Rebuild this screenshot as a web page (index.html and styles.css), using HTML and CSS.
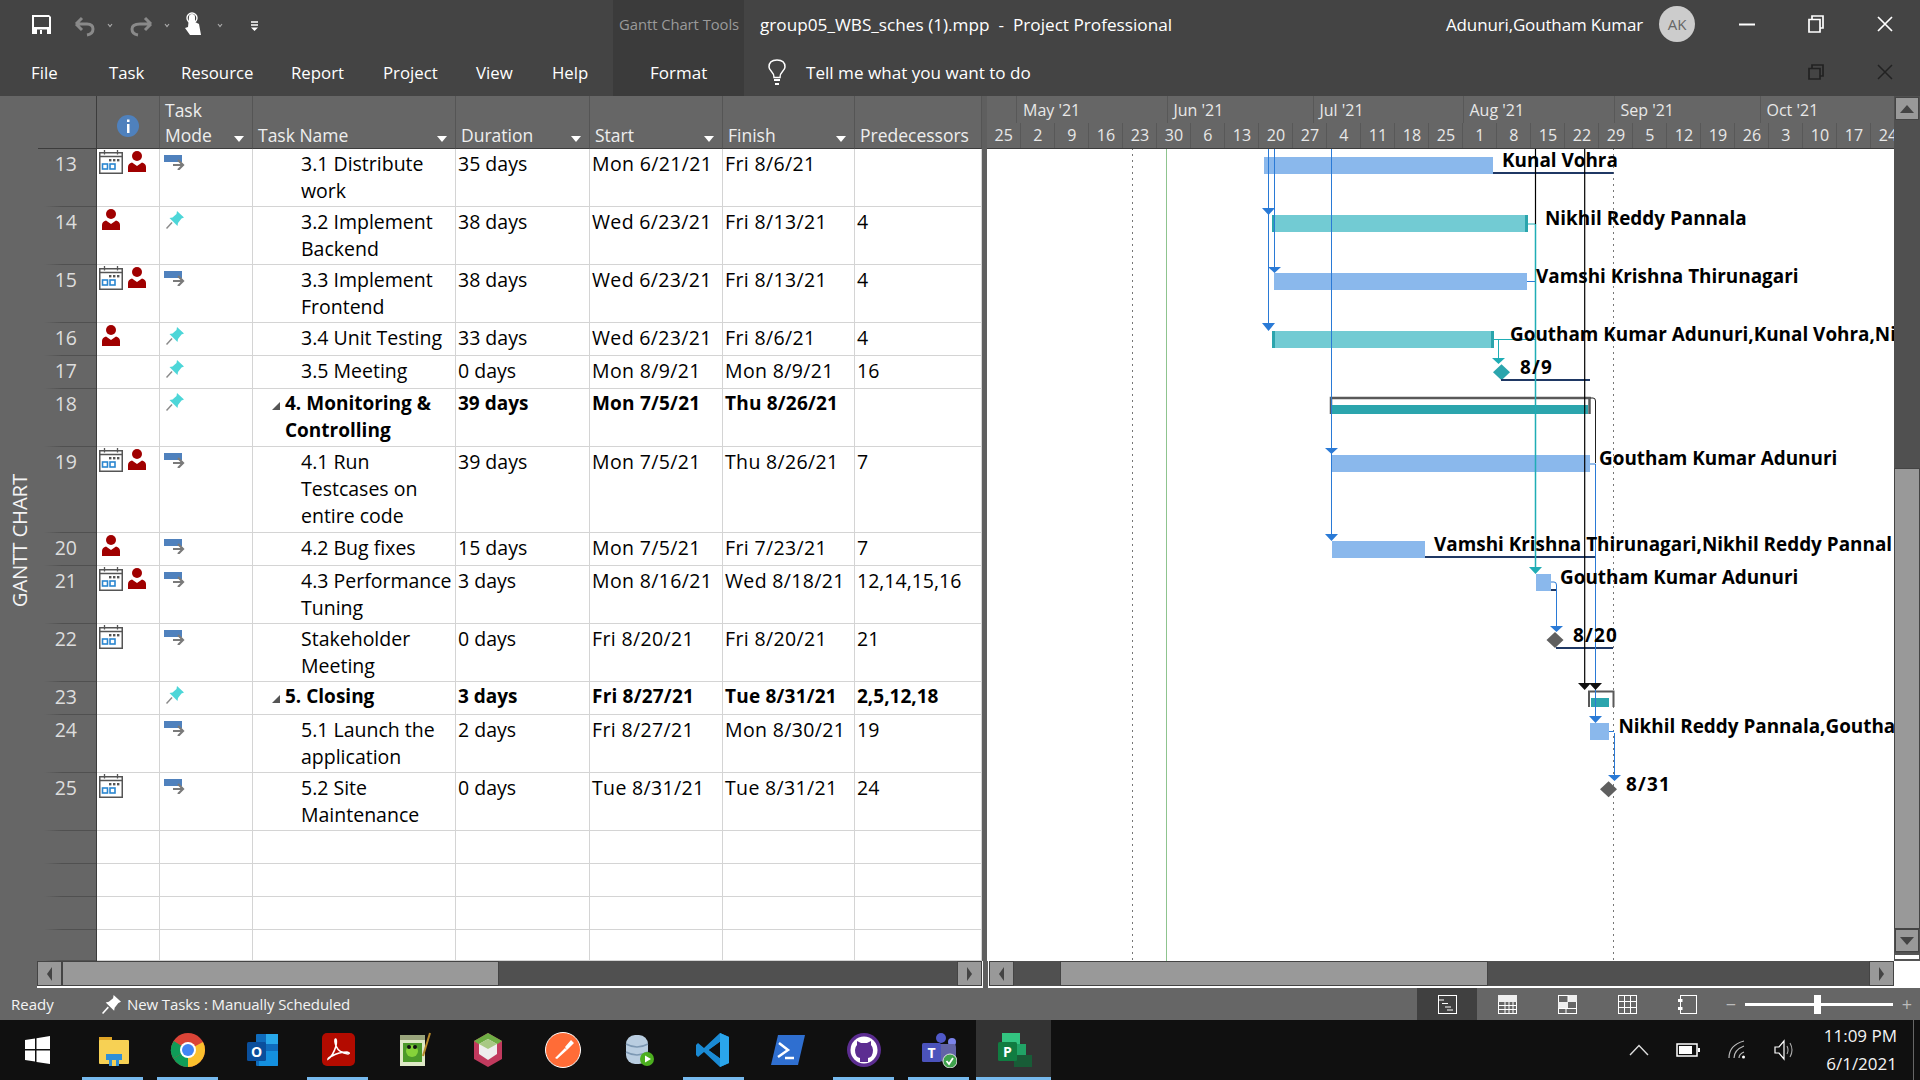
FILE: index.html
```html
<!DOCTYPE html>
<html lang="en">
<head>
<meta charset="utf-8">
<title>group05_WBS_sches (1).mpp - Project Professional</title>
<link rel="stylesheet" href="styles.css">
</head>
<body>
<svg class="defs" width="0" height="0" aria-hidden="true">
  <symbol id="cal" viewBox="0 0 24 24">
    <rect x="0.75" y="2.75" width="22.5" height="20.5" fill="#fff" stroke="#555" stroke-width="1.5"/>
    <path d="M0 6.5H24M5.5 0V4.5M18.5 0V4.5" stroke="#555" stroke-width="1.3" fill="none"/>
    <rect x="10" y="9" width="2.4" height="2.4" fill="#555"/><rect x="14" y="9" width="2.4" height="2.4" fill="#555"/><rect x="18" y="9" width="2.4" height="2.4" fill="#555"/>
    <rect x="3.5" y="14" width="5" height="5" fill="none" stroke="#2a86d0" stroke-width="1.6"/><rect x="11" y="14" width="5" height="5" fill="none" stroke="#2a86d0" stroke-width="1.6"/>
  </symbol>
  <symbol id="per" viewBox="0 0 18 21">
    <circle cx="9" cy="5" r="5" fill="#a00000"/>
    <path d="M0 21V16Q0 12.500 4 11.500L9 15L14 11.500Q18 12.500 18 16V21Z" fill="#a00000"/>
  </symbol>
  <symbol id="man" viewBox="0 0 22 15">
    <rect x="0" y="0" width="18" height="7" fill="#4f81bd"/>
    <path d="M9 10H18M14 5L19 10L14 15" fill="none" stroke="#7a7a7a" stroke-width="2.200"/>
  </symbol>
  <symbol id="pin" viewBox="0 0 18 18">
    <path d="M11 0L18 6.500L15.500 7.500L12 12L11.500 15L3.500 7L6.500 6.500L10.500 3Z" fill="#4dd6d8"/>
    <path d="M6 11.500L0.500 17.500" stroke="#8a8a8a" stroke-width="1.500"/>
  </symbol>
</svg>

<header class="titlebar">
  <div class="bar-row">
    <div class="qat">
      <svg width="270" height="48" viewBox="0 0 270 48">
        <path d="M32 15H49L51 17V34H32Z" fill="#fff"/><rect x="34" y="17" width="15" height="10" fill="#444"/><rect x="37" y="29.500" width="10" height="4.500" fill="#444"/><rect x="40" y="30" width="2" height="4" fill="#fff"/>
        <path d="M76 24L82 18M76 24L82 30M76 24H87Q93 24 93 29Q93 34 87 35" fill="none" stroke="#8a8a8a" stroke-width="3"/>
        <path d="M108 24L110 26.500L112 24M165 24L167 26.500L169 24M218 24L220 26.500L222 24" fill="none" stroke="#aaa" stroke-width="1.200"/>
        <path d="M151 24L145 18M151 24L145 30M151 24H140Q132 24 132 29Q132 34 138 35" fill="none" stroke="#8a8a8a" stroke-width="3"/>
        <path d="M189 17Q189 14 192 14Q195 14 195 17V22L199 24L201 35H190L185 28L188 27Z" fill="#fff"/><circle cx="192" cy="18" r="5" fill="none" stroke="#fff" stroke-width="1.400"/>
        <path d="M251 22H258M251 25H258" stroke="#fff" stroke-width="1.300"/><path d="M251 27.500H258L254.500 31Z" fill="#fff"/>
      </svg>
    </div>
    <div class="ctx ctx-top">Gantt Chart Tools</div>
    <div class="doc-title">group05_WBS_sches (1).mpp&nbsp; - &nbsp;Project Professional</div>
    <div class="user">Adunuri,Goutham Kumar</div>
    <div class="avatar">AK</div>
    <svg class="win min" width="16" height="16" viewBox="0 0 16 16"><path d="M0 8.500H16" stroke="#fff" stroke-width="2"/></svg>
    <svg class="win res" width="16" height="18" viewBox="0 0 16 18"><path d="M4 4V1H15V13H12M1 4.500H12V17H1Z" fill="none" stroke="#fff" stroke-width="1.700"/></svg>
    <svg class="win cls" width="16" height="16" viewBox="0 0 16 16"><path d="M1 1L15 15M15 1L1 15" stroke="#fff" stroke-width="1.700"/></svg>
  </div>
  <div class="bar-row">
    <nav class="tabs">
      <span class="tab">File</span><span class="tab">Task</span><span class="tab">Resource</span><span class="tab">Report</span><span class="tab">Project</span><span class="tab">View</span><span class="tab">Help</span>
    </nav>
    <div class="ctx ctx-tab">Format</div>
    <div class="tell">
      <svg width="18" height="26" viewBox="0 0 18 26"><path d="M6 18.500Q6 15 3.500 12.500Q1 10 1 8Q1 1 9 1Q17 1 17 8Q17 10 14.500 12.500Q12 15 12 18.500Z" fill="none" stroke="#fff" stroke-width="1.500"/><path d="M6 21H12M7 25H11" stroke="#fff" stroke-width="2"/></svg>
      <span>Tell me what you want to do</span>
    </div>
    <svg class="win res dim" width="16" height="16" viewBox="0 0 16 16"><path d="M4 4V1H15V12H12M1 4.500H12V15H1Z" fill="none" stroke="#222" stroke-width="1.700"/></svg>
    <svg class="win cls dim" width="16" height="16" viewBox="0 0 16 16"><path d="M1 1L15 15M15 1L1 15" stroke="#222" stroke-width="1.500"/></svg>
  </div>
</header>

<main class="workspace">
  <aside class="side"><span class="side-label">GANTT CHART</span></aside>

  <section class="table">
    <div class="row head">
      <div class="c id"></div>
      <div class="c ind"><svg width="22" height="22" viewBox="0 0 22 22"><circle cx="11" cy="11" r="11" fill="#4f81bd"/><rect x="10" y="9" width="2.500" height="9" fill="#fff"/><rect x="10" y="4.500" width="2.500" height="2.500" fill="#fff"/></svg></div>
      <div class="c th"><span>Task<br>Mode</span><i class="drop"></i></div>
      <div class="c th"><span>Task Name</span><i class="drop"></i></div>
      <div class="c th"><span>Duration</span><i class="drop"></i></div>
      <div class="c th"><span>Start</span><i class="drop"></i></div>
      <div class="c th"><span>Finish</span><i class="drop"></i></div>
      <div class="c th"><span>Predecessors</span></div>
    </div>

    <div class="row h2">
      <div class="c id">13</div><div class="c ind"><svg class="cal"><use href="#cal"/></svg><svg class="per"><use href="#per"/></svg></div><div class="c mode"><svg class="man"><use href="#man"/></svg></div>
      <div class="c name">3.1 Distribute<br>work</div><div class="c dur">35 days</div><div class="c dt">Mon 6/21/21</div><div class="c dt">Fri 8/6/21</div><div class="c pre"></div>
    </div>
    <div class="row h2">
      <div class="c id">14</div><div class="c ind solo"><svg class="per"><use href="#per"/></svg></div><div class="c mode"><svg class="pin"><use href="#pin"/></svg></div>
      <div class="c name">3.2 Implement<br>Backend</div><div class="c dur">38 days</div><div class="c dt">Wed 6/23/21</div><div class="c dt">Fri 8/13/21</div><div class="c pre">4</div>
    </div>
    <div class="row h2">
      <div class="c id">15</div><div class="c ind"><svg class="cal"><use href="#cal"/></svg><svg class="per"><use href="#per"/></svg></div><div class="c mode"><svg class="man"><use href="#man"/></svg></div>
      <div class="c name">3.3 Implement<br>Frontend</div><div class="c dur">38 days</div><div class="c dt">Wed 6/23/21</div><div class="c dt">Fri 8/13/21</div><div class="c pre">4</div>
    </div>
    <div class="row h1">
      <div class="c id">16</div><div class="c ind solo"><svg class="per"><use href="#per"/></svg></div><div class="c mode"><svg class="pin"><use href="#pin"/></svg></div>
      <div class="c name">3.4 Unit Testing</div><div class="c dur">33 days</div><div class="c dt">Wed 6/23/21</div><div class="c dt">Fri 8/6/21</div><div class="c pre">4</div>
    </div>
    <div class="row h1">
      <div class="c id">17</div><div class="c ind"></div><div class="c mode"><svg class="pin"><use href="#pin"/></svg></div>
      <div class="c name">3.5 Meeting</div><div class="c dur">0 days</div><div class="c dt">Mon 8/9/21</div><div class="c dt">Mon 8/9/21</div><div class="c pre">16</div>
    </div>
    <div class="row h2 sum">
      <div class="c id">18</div><div class="c ind"></div><div class="c mode"><svg class="pin"><use href="#pin"/></svg></div>
      <div class="c name"><i class="caret"></i><span>4. Monitoring &amp;<br>Controlling</span></div><div class="c dur">39 days</div><div class="c dt">Mon 7/5/21</div><div class="c dt">Thu 8/26/21</div><div class="c pre"></div>
    </div>
    <div class="row h3">
      <div class="c id">19</div><div class="c ind"><svg class="cal"><use href="#cal"/></svg><svg class="per"><use href="#per"/></svg></div><div class="c mode"><svg class="man"><use href="#man"/></svg></div>
      <div class="c name">4.1 Run<br>Testcases on<br>entire code</div><div class="c dur">39 days</div><div class="c dt">Mon 7/5/21</div><div class="c dt">Thu 8/26/21</div><div class="c pre">7</div>
    </div>
    <div class="row h1">
      <div class="c id">20</div><div class="c ind solo"><svg class="per"><use href="#per"/></svg></div><div class="c mode"><svg class="man"><use href="#man"/></svg></div>
      <div class="c name">4.2 Bug fixes</div><div class="c dur">15 days</div><div class="c dt">Mon 7/5/21</div><div class="c dt">Fri 7/23/21</div><div class="c pre">7</div>
    </div>
    <div class="row h2">
      <div class="c id">21</div><div class="c ind"><svg class="cal"><use href="#cal"/></svg><svg class="per"><use href="#per"/></svg></div><div class="c mode"><svg class="man"><use href="#man"/></svg></div>
      <div class="c name">4.3 Performance<br>Tuning</div><div class="c dur">3 days</div><div class="c dt">Mon 8/16/21</div><div class="c dt">Wed 8/18/21</div><div class="c pre">12,14,15,16</div>
    </div>
    <div class="row h2">
      <div class="c id">22</div><div class="c ind"><svg class="cal"><use href="#cal"/></svg></div><div class="c mode"><svg class="man"><use href="#man"/></svg></div>
      <div class="c name">Stakeholder<br>Meeting</div><div class="c dur">0 days</div><div class="c dt">Fri 8/20/21</div><div class="c dt">Fri 8/20/21</div><div class="c pre">21</div>
    </div>
    <div class="row h1 sum">
      <div class="c id">23</div><div class="c ind"></div><div class="c mode"><svg class="pin"><use href="#pin"/></svg></div>
      <div class="c name"><i class="caret"></i><span>5. Closing</span></div><div class="c dur">3 days</div><div class="c dt">Fri 8/27/21</div><div class="c dt">Tue 8/31/21</div><div class="c pre">2,5,12,18</div>
    </div>
    <div class="row h2">
      <div class="c id">24</div><div class="c ind"></div><div class="c mode"><svg class="man"><use href="#man"/></svg></div>
      <div class="c name">5.1 Launch the<br>application</div><div class="c dur">2 days</div><div class="c dt">Fri 8/27/21</div><div class="c dt">Mon 8/30/21</div><div class="c pre">19</div>
    </div>
    <div class="row h2">
      <div class="c id">25</div><div class="c ind"><svg class="cal"><use href="#cal"/></svg></div><div class="c mode"><svg class="man"><use href="#man"/></svg></div>
      <div class="c name">5.2 Site<br>Maintenance</div><div class="c dur">0 days</div><div class="c dt">Tue 8/31/21</div><div class="c dt">Tue 8/31/21</div><div class="c pre">24</div>
    </div>
    <div class="row h1"><div class="c id"></div><div class="c ind"></div><div class="c mode"></div><div class="c name"></div><div class="c dur"></div><div class="c dt"></div><div class="c dt"></div><div class="c pre"></div></div>
    <div class="row h1"><div class="c id"></div><div class="c ind"></div><div class="c mode"></div><div class="c name"></div><div class="c dur"></div><div class="c dt"></div><div class="c dt"></div><div class="c pre"></div></div>
    <div class="row h1"><div class="c id"></div><div class="c ind"></div><div class="c mode"></div><div class="c name"></div><div class="c dur"></div><div class="c dt"></div><div class="c dt"></div><div class="c pre"></div></div>
    <div class="row fill"><div class="c id"></div><div class="c ind"></div><div class="c mode"></div><div class="c name"></div><div class="c dur"></div><div class="c dt"></div><div class="c dt"></div><div class="c pre"></div></div>
  </section>

  <div class="split"></div>

  <section class="chart">
    <div class="months">
      <span></span><span>May '21</span><span>Jun '21</span><span>Jul '21</span><span>Aug '21</span><span>Sep '21</span><span>Oct '21</span>
    </div>
    <div class="weeks">
      <span>25</span><span>2</span><span>9</span><span>16</span><span>23</span><span>30</span><span>6</span><span>13</span><span>20</span><span>27</span><span>4</span><span>11</span><span>18</span><span>25</span><span>1</span><span>8</span><span>15</span><span>22</span><span>29</span><span>5</span><span>12</span><span>19</span><span>26</span><span>3</span><span>10</span><span>17</span><span>24</span>
    </div>
    <svg class="gantt" width="907" height="812" viewBox="987 149 907 812">
      <path d="M1132.500 148V961M1613.500 148V961" stroke="#777" stroke-dasharray="2 4" fill="none"/>
      <path d="M1166.500 148V961" stroke="#8fc48f" fill="none"/>

      <rect x="1264" y="157" width="229" height="17" fill="#8ab8ec"/>
      <rect x="1272" y="215" width="256" height="17" fill="#72cbd3"/><rect x="1272" y="215" width="3" height="17" fill="#2ba5ad"/><rect x="1525" y="215" width="3" height="17" fill="#2ba5ad"/>
      <rect x="1274" y="273" width="253" height="17" fill="#8ab8ec"/>
      <rect x="1272" y="331" width="222" height="17" fill="#72cbd3"/><rect x="1272" y="331" width="3" height="17" fill="#2ba5ad"/><rect x="1491" y="331" width="3" height="17" fill="#2ba5ad"/>
      <path d="M1501.500 364.300L1510 372.300L1501.500 380.300L1493 372.300Z" fill="#2ba5ad"/>
      <path d="M1331 414V398H1589.500V414" fill="none" stroke="#595959" stroke-width="2.500"/>
      <rect x="1332" y="405" width="256" height="9" fill="#2ba5ad"/>
      <rect x="1331.500" y="455" width="258.500" height="17" fill="#8ab8ec"/>
      <rect x="1332" y="541" width="93" height="17" fill="#8ab8ec"/>
      <rect x="1536" y="574" width="15" height="17" fill="#8ab8ec"/>
      <path d="M1555 632L1563.500 640L1555 648L1546.500 640Z" fill="#5f5f5f"/>
      <path d="M1589 707V691.500H1613.500V707" fill="none" stroke="#595959" stroke-width="2"/>
      <rect x="1591" y="698" width="18" height="9" fill="#2ba5ad"/>
      <rect x="1590" y="723" width="19" height="17" fill="#8ab8ec"/>
      <path d="M1608.600 781.300L1617 789.300L1608.600 797.300L1600 789.300Z" fill="#5f5f5f"/>

      <path d="M1493 173H1613.500M1501 380H1590M1425 557H1595.500M1551 590H1556.500M1556 648H1613" stroke="#1f3864" stroke-width="2" fill="none"/>

      <path d="M1268.500 148V323M1274.500 148V267M1331.500 148V534M1590 464H1595.500V716M1527 281.500H1535.500M1551 582H1554Q1556.500 582 1556.500 585V626M1609 731.500H1614M1614.500 733V775" stroke="#2a7ad6" fill="none"/>
      <path d="M1528 224H1535.500M1494 339.500H1535.500M1498.500 340V358" stroke="#1fadb5" fill="none"/>
      <path d="M1535.500 224V567" stroke="#1fadb5" stroke-width="1.500" fill="none"/>
      <path d="M1535.500 148V224M1584.700 148V683" stroke="#000" stroke-width="1.200" fill="none"/>
      <path d="M1590 398H1593Q1595.500 398 1595.500 401V463" stroke="#222" fill="none"/>

      <path d="M1262 208H1275L1268.500 215ZM1268 267H1281L1274.500 273ZM1262 323H1275L1268.500 331ZM1325 448H1338L1331.500 454ZM1325 534H1338L1331.500 541ZM1550 626H1563L1556.500 632ZM1589 716H1602L1595.500 723ZM1608 775H1621L1614.500 781Z" fill="#2a7ad6"/>
      <path d="M1492 358H1505L1498.500 364ZM1529 567H1542L1535.500 574Z" fill="#1fadb5"/>
      <path d="M1578 683H1591L1584.700 690ZM1589 683H1602L1595.500 690Z" fill="#111"/>

      <text class="lbl" x="1502" y="167">Kunal Vohra</text>
      <text class="lbl" x="1545" y="225">Nikhil Reddy Pannala</text>
      <text class="lbl" x="1536" y="283">Vamshi Krishna Thirunagari</text>
      <text class="lbl" x="1510" y="341">Goutham Kumar Adunuri,Kunal Vohra,Ni</text>
      <text class="lbl num" x="1520" y="374">8/9</text>
      <text class="lbl" x="1599" y="465">Goutham Kumar Adunuri</text>
      <text class="lbl" x="1434" y="551">Vamshi Krishna Thirunagari,Nikhil Reddy Pannal</text>
      <text class="lbl" x="1560" y="584">Goutham Kumar Adunuri</text>
      <text class="lbl num" x="1573" y="642">8/20</text>
      <text class="lbl" x="1618.500" y="733">Nikhil Reddy Pannala,Goutha</text>
      <text class="lbl num" x="1626" y="791">8/31</text>
    </svg>
  </section>

  <aside class="vscroll">
    <div class="sbtn"><i class="tri up"></i></div>
    <div class="vtrack"></div>
    <div class="vthumb"></div>
    <div class="sbtn"><i class="tri down"></i></div>
    <div class="vsplit"></div>
  </aside>
</main>

<div class="hbars">
  <div class="hb-side"></div>
  <div class="hb hb-left">
    <div class="sbtn"><i class="tri left"></i></div>
    <div class="hthumb t1"></div>
    <div class="htrack"></div>
    <div class="sbtn"><i class="tri right"></i></div>
  </div>
  <div class="hb-gap"></div>
  <div class="hb hb-right">
    <div class="sbtn"><i class="tri left"></i></div>
    <div class="hgap"></div>
    <div class="hthumb t2"></div>
    <div class="htrack"></div>
    <div class="sbtn"><i class="tri right"></i></div>
  </div>
  <div class="hb-end"></div>
</div>

<footer class="status">
  <span class="ready">Ready</span>
  <svg class="st-pin" width="19" height="19" viewBox="0 0 18 18"><path d="M11 0L18 6.500L15.500 7.500L12 12L11.500 15L3.500 7L6.500 6.500L10.500 3Z" fill="#fff"/><path d="M6 11.500L0.500 17.500" stroke="#fff" stroke-width="1.500"/></svg>
  <span class="newtasks">New Tasks : Manually Scheduled</span>
  <div class="views">
    <div class="view on"><svg width="19" height="19" viewBox="0 0 19 19"><rect x="0.500" y="0.500" width="18" height="18" fill="none" stroke="#fff"/><path d="M1 5H6M4 8.500H10M7 12H13M9 15H15" stroke="#fff" fill="none"/></svg></div>
    <div class="view"><svg width="19" height="19" viewBox="0 0 19 19"><rect x="0.500" y="0.500" width="18" height="18" fill="none" stroke="#fff"/><rect x="0" y="0" width="19" height="7" fill="#eee"/><path d="M7 7V19M11 7V19M15 7V19M0 10.500H19M0 14.500H19" stroke="#fff" fill="none"/></svg></div>
    <div class="view"><svg width="19" height="19" viewBox="0 0 19 19"><rect x="0.500" y="0.500" width="18" height="18" fill="none" stroke="#fff"/><rect x="0" y="7" width="10" height="6" fill="#eee"/><rect x="10" y="0" width="9" height="7" fill="#eee"/><path d="M0 13.500H19M10 0V7M8 13V19" stroke="#fff" fill="none"/></svg></div>
    <div class="view"><svg width="19" height="19" viewBox="0 0 19 19"><rect x="0.500" y="0.500" width="18" height="18" fill="none" stroke="#fff"/><path d="M6.500 0V19M12.500 0V19M0 6.500H19M0 12.500H19" stroke="#fff" fill="none"/></svg></div>
    <div class="view"><svg width="19" height="19" viewBox="0 0 19 19"><rect x="2.500" y="0.500" width="16" height="18" fill="none" stroke="#fff"/><rect x="0" y="4" width="4.500" height="3" fill="#fff"/><rect x="0" y="12" width="4.500" height="3" fill="#fff"/></svg></div>
  </div>
  <div class="zoom">
    <span class="zm">−</span>
    <div class="zline"><i class="zthumb"></i></div>
    <span class="zm">+</span>
  </div>
</footer>

<div class="taskbar">
  <div class="slot"><svg width="36" height="36" viewBox="0 0 36 36"><path d="M5 8L15 6.500V17H5ZM16.500 6.300L30 4V17H16.500ZM5 18.500H15V29.500L5 28ZM16.500 18.500H30V32L16.500 30Z" fill="#fff"/></svg></div>
  <div class="slot open"><svg width="36" height="36" viewBox="0 0 36 36"><path d="M4 5H17V9H4Z" fill="#e0a526"/><rect x="4" y="8" width="30" height="24" rx="1" fill="#f7d154"/><path d="M11 28V22H27V28H24V34H14V28Z" fill="#2f8fd8"/><rect x="17" y="28" width="4" height="6" fill="#f7d154"/></svg></div>
  <div class="slot open"><svg width="36" height="36" viewBox="0 0 36 36"><circle cx="18" cy="18" r="17" fill="#db4437"/><path d="M18 18L3.300 26.500A17 17 0 0 0 18 35Z" fill="#0f9d58"/><path d="M18 35A17 17 0 0 0 33 10L18 18Z" fill="#fbc02d"/><path d="M3 26.500A17 17 0 0 1 3.800 9L18 18Z" fill="#0f9d58"/><circle cx="18" cy="18" r="8" fill="#fff"/><circle cx="18" cy="18" r="6" fill="#4285f4"/></svg></div>
  <div class="slot"><svg width="36" height="36" viewBox="0 0 36 36"><rect x="11" y="2" width="22" height="32" rx="1" fill="#0f6cbd"/><rect x="21" y="2" width="12" height="10" fill="#28a8ea"/><path d="M14 19L33 19V33Q33 34 32 34H14Z" fill="#1490df"/><rect x="2" y="10" width="19" height="19" rx="1.500" fill="#0a4f9c"/><text class="ti" x="11.500" y="25" text-anchor="middle">O</text></svg></div>
  <div class="slot open"><svg width="36" height="36" viewBox="0 0 36 36"><rect x="2" y="1" width="33" height="33" rx="5" fill="#b30b00"/><path d="M8 27Q13 24 16 14Q17 7 15.500 7Q14 8 16 14Q19 21 28 22Q31 21 27 20Q19 20 12 24Q8 26 8 27Z" fill="none" stroke="#fff" stroke-width="1.600"/></svg></div>
  <div class="slot"><svg width="36" height="36" viewBox="0 0 36 36"><rect x="5" y="3" width="25" height="31" fill="#dfe9c7"/><rect x="5" y="3" width="25" height="5" fill="#9aa57c"/><rect x="8" y="11" width="19" height="19" fill="#4c9a2a"/><circle cx="17" cy="19" r="6" fill="#86d33a"/><circle cx="14" cy="15" r="2" fill="#111"/><circle cx="20" cy="15" r="2" fill="#111"/><path d="M28 24L35 1" stroke="#b7892a" stroke-width="2"/></svg></div>
  <div class="slot"><svg width="36" height="36" viewBox="0 0 36 36"><path d="M18 1L32 9V27L18 35L4 27V9Z" fill="#c13a5e"/><path d="M18 1L32 9L26 13H10L4 9Z" fill="#6fae45"/><path d="M9 12L18 7L27 12V22L18 28L9 22Z" fill="#eee"/><path d="M9 12L18 7L27 12L18 17Z" fill="#a8c985"/></svg></div>
  <div class="slot"><svg width="36" height="36" viewBox="0 0 36 36"><circle cx="18" cy="18" r="17.500" fill="#ff6c37" stroke="#fff"/><path d="M10 26L20 16L22 18L12 27ZM20 15L26 8L29 11L22 18Z" fill="#fff"/></svg></div>
  <div class="slot"><svg width="36" height="36" viewBox="0 0 36 36"><rect x="6" y="3" width="22" height="29" rx="9" fill="#b9cde0"/><path d="M6 12Q17 18 28 12M6 20Q17 26 28 20" stroke="#7d98b3" fill="none" stroke-width="1.500"/><circle cx="27" cy="27" r="7" fill="#4caf1f"/><path d="M25 23.500L31 27L25 30.500Z" fill="#fff"/></svg></div>
  <div class="slot open"><svg width="36" height="36" viewBox="0 0 36 36"><path d="M25 1L34 5V31L25 35L9 20L3 25L1 23V13L3 11L9 16ZM25 10L14 18L25 26Z" fill="#1a8ad4"/><path d="M25 1L34 5V31L25 35Z" fill="#2aa5ec"/><path d="M25 10L14 18L25 26Z" fill="#101010"/></svg></div>
  <div class="slot"><svg width="36" height="36" viewBox="0 0 36 36"><path d="M8 3H35L28 33H1Z" fill="#2f6fd0"/><path d="M9 11L18 18L8 25" fill="none" stroke="#fff" stroke-width="2.500"/><path d="M15 26H24" stroke="#fff" stroke-width="2.500"/></svg></div>
  <div class="slot open"><svg width="36" height="36" viewBox="0 0 36 36"><circle cx="18" cy="18" r="17" fill="#5c2d91"/><circle cx="18" cy="18" r="13.500" fill="#fff"/><path d="M14 30V26Q9 25 9 18Q9 15 11 13V9L15 11H21L25 9V13Q27 15 27 18Q27 25 22 26V30Z" fill="#5c2d91"/></svg></div>
  <div class="slot open"><svg width="36" height="36" viewBox="0 0 36 36"><circle cx="20" cy="6" r="5" fill="#5059c9"/><circle cx="31" cy="10" r="4" fill="#7b83eb"/><path d="M16 12H33Q35 12 35 16V28Q33 32 27 31L16 28Z" fill="#6264a7"/><rect x="1" y="11" width="19" height="19" rx="1.500" fill="#4b53bc"/><text class="ti" x="10.500" y="26" text-anchor="middle">T</text><circle cx="29" cy="29" r="7" fill="#3fa34d" stroke="#ddd"/><path d="M25.500 29L28 32L32 26" fill="none" stroke="#fff" stroke-width="1.800"/></svg></div>
  <div class="slot open active"><svg width="36" height="36" viewBox="0 0 36 36"><rect x="6" y="1" width="18" height="12" fill="#33c481"/><rect x="12" y="12" width="18" height="12" fill="#21a366"/><rect x="18" y="23" width="18" height="12" fill="#185c37"/><rect x="2" y="10" width="19" height="19" rx="1.500" fill="#107c41"/><text class="ti" x="11.500" y="25" text-anchor="middle">P</text></svg></div>

  <div class="tray">
    <svg width="20" height="12" viewBox="0 0 20 12"><path d="M1 11L10 1.500L19 11" fill="none" stroke="#ddd" stroke-width="1.400"/></svg>
    <svg class="t-bat" width="24" height="14" viewBox="0 0 24 14"><rect x="1" y="1" width="20" height="12" fill="none" stroke="#fff" stroke-width="1.500"/><rect x="3" y="3" width="13" height="8" fill="#fff"/><rect x="22" y="5" width="2" height="4" fill="#fff"/></svg>
    <svg class="t-wifi" width="20" height="20" viewBox="0 0 20 20"><path d="M1 18Q1 5 16 1M6 18Q6 10 16 6M11 18Q11 14 16 12" fill="none" stroke="#bbb" stroke-width="1.200"/><circle cx="15.500" cy="17" r="1.500" fill="#fff"/></svg>
    <svg class="t-vol" width="22" height="22" viewBox="0 0 22 22"><path d="M1 8H5L10 2V20L5 14H1Z" fill="none" stroke="#fff" stroke-width="1.200"/><path d="M13 7Q15 11 13 15M16 4Q20 11 16 18" fill="none" stroke="#aaa" stroke-width="1.100"/></svg>
    <div class="clock"><span>11:09 PM</span><span>6/1/2021</span></div>
    <div class="desk"></div>
  </div>
</div>
</body>
</html>
```

FILE: styles.css
```css
* { box-sizing: border-box; }
html, body { margin: 0; padding: 0; }
body {
  width: 1920px;
  height: 1080px;
  overflow: hidden;
  display: flex;
  flex-direction: column;
  font-family: "Open Sans", "Noto Sans", sans-serif;
  background: #fff;
}
.defs { position: absolute; }

/* title bar + ribbon tabs */
.titlebar { height: 96px; background: #444; color: #fff; flex: none; }
.bar-row { height: 48px; display: flex; align-items: center; }
.qat { width: 613px; height: 48px; flex: none; }
.qat svg { display: block; }
.ctx { width: 131px; height: 48px; flex: none; background: #3b3b3b; display: flex; align-items: center; }
.ctx-top { color: #9a9a9a; font-size: 14.8px; padding-left: 6px; letter-spacing: -.05px; white-space: nowrap; }
.ctx-tab { font-size: 17px; padding-left: 37px; }
.doc-title { margin-left: 16px; font-size: 17.2px; white-space: nowrap; flex: 1; }
.user { font-size: 17px; letter-spacing: -.15px; white-space: nowrap; }
.avatar { width: 36px; height: 36px; border-radius: 50%; margin-left: 16px; background: #ccc; color: #666; font-size: 15px; display: flex; align-items: center; justify-content: center; flex: none; }
.win { flex: none; display: block; }
.min { margin-left: 44px; }
.res { margin-left: 53px; }
.cls { margin-left: 53px; margin-right: 27px; }
.tabs { width: 613px; height: 48px; flex: none; padding-left: 31px; display: grid; grid-template-columns: 78px 72px 110px 92px 93px 76px 1fr; align-items: center; font-size: 16.8px; }
.tell { flex: 1; display: flex; align-items: center; gap: 20px; padding-left: 24px; font-size: 17.1px; }

/* main */
.workspace { height: 865px; flex: none; display: flex; background: #666; }
.side { width: 38px; flex: none; display: flex; align-items: center; justify-content: flex-start; padding: 25px 0 0 7px; }
.side-label { writing-mode: vertical-rl; transform: rotate(180deg); color: #f4f4f4; font-size: 20.4px; letter-spacing: -.2px; white-space: nowrap; line-height: 24px; }

.table { width: 944px; flex: none; display: flex; flex-direction: column; color: #000; font-size: 19.5px; }
.row { display: grid; grid-template-columns: 59px 63px 93px 203px 134px 133px 132px 127px; flex: none; line-height: 27px; }
.head { height: 53px; background: #666; color: #eee; font-size: 17.5px; line-height: 24.5px; }
.h1 { height: 33px; }
.h2 { height: 58px; }
.h3 { height: 86px; }
.fill { flex: 1; }
.c { background: #fff; border-right: 1px solid #d4d4d4; border-bottom: 1px solid #d4d4d4; padding: 1px 0 0 2px; white-space: nowrap; overflow: hidden; }
.head .c { background: #666; border-right-color: #555; border-bottom: 1px solid #3c3c3c; }
.c.id { background: linear-gradient(to right, #666 6px, #505050 24px) left bottom / 100% 1px no-repeat #666; color: #ddd; text-align: right; padding: 1px 19px 0 0; border-right: 1px solid #3c3c3c; border-bottom: 0; }
.head .c.id { background: #666; border-right: 1px solid #3c3c3c; border-bottom: 1px solid #3c3c3c; padding: 0; }
.sum .c.id { font-weight: 400; font-size: 19.5px; }
.c.ind { display: flex; gap: 5px; padding: 1px 0 0 2px; }
.c.solo { padding-left: 5px; }
.head .c.ind { align-items: center; justify-content: center; padding: 8px 0 0; }
.cal { width: 24px; height: 24px; display: block; flex: none; }
.per { width: 18px; height: 21px; display: block; flex: none; margin-top: 1px; }
.man { width: 22px; height: 15px; display: block; margin: 4px 0 0 1px; }
.pin { width: 18px; height: 18px; display: block; margin: 2px 0 0 3px; }
.c.mode { padding-left: 3px; padding-top: 2px; }
.c.name { padding-left: 48px; }
.c.dt { letter-spacing: .35px; }
.sum { font-weight: 700; font-size: 19px; }
.sum .c.dt { letter-spacing: .2px; }
.sum .c.name { display: flex; align-items: flex-start; padding-left: 19px; }
.caret { width: 0; height: 0; flex: none; margin: 12px 5px 0 0; border-left: 8px solid transparent; border-bottom: 8px solid #555; }
.head .th { display: flex; align-items: flex-end; justify-content: space-between; padding: 0 8px 0 5px; overflow: visible; }
.th span { margin-bottom: 1px; }
.drop { width: 0; height: 0; margin-bottom: 6px; border-left: 5px solid transparent; border-right: 5px solid transparent; border-top: 6px solid #fff; flex: none; }
.split { width: 5px; flex: none; background: #5f5f5f; }

.chart { width: 907px; flex: none; display: flex; flex-direction: column; overflow: hidden; }
.months { height: 27px; flex: none; display: grid; grid-template-columns: 29px 150.500px 146px 150px 151px 146px 1fr; background: #666; color: #e8e8e8; font-size: 16px; }
.months span { border-left: 1px solid #585858; padding-left: 6px; line-height: 28px; white-space: nowrap; }
.months span:first-child { border-left: 0; }
.weeks { height: 26px; flex: none; display: grid; grid-template-columns: 33.400px repeat(26, 34px); background: #666; color: #e8e8e8; font-size: 16px; border-bottom: 1px solid #3c3c3c; overflow: hidden; }
.weeks span { border-left: 1px solid #585858; text-align: center; line-height: 24px; }
.weeks span:first-child { border-left: 0; }
.gantt { display: block; background: #fff; flex: none; }
.lbl { font-family: "Open Sans", "Noto Sans", sans-serif; font-weight: 700; font-size: 18.9px; fill: #000; }
.num { letter-spacing: 1.2px; }

/* scrollbars */
.vscroll { width: 26px; flex: none; display: flex; flex-direction: column; background: #505050; padding-top: 1px; }
.sbtn { width: 24px; height: 23px; background: #999; border: 1px solid #444; display: flex; align-items: center; justify-content: center; flex: none; }
.vscroll .sbtn { margin-left: 1px; }
.vtrack { height: 348px; flex: none; }
.vthumb { flex: 1; background: #999; border: 1px solid #444; }
.vsplit { height: 8px; flex: none; background: #fff; border: 1px solid #555; border-width: 2px 1px; margin-top: 1px; }
.tri { width: 0; height: 0; display: block; }
.tri.up { border-left: 7px solid transparent; border-right: 7px solid transparent; border-bottom: 8px solid #444; }
.tri.down { border-left: 7px solid transparent; border-right: 7px solid transparent; border-top: 8px solid #444; }
.tri.left { border-top: 7px solid transparent; border-bottom: 7px solid transparent; border-right: 5px solid #444; }
.tri.right { border-top: 7px solid transparent; border-bottom: 7px solid transparent; border-left: 5px solid #444; }

.hbars { height: 27px; flex: none; display: flex; background: #fff; }
.hb-side { width: 37px; flex: none; background: #666; }
.hb { height: 25px; display: flex; background: #505050; flex: none; }
.hb-left { width: 945px; }
.hb-right { width: 905px; }
.hb .sbtn { width: 25px; height: 25px; }
.hb-gap { width: 7px; flex: none; background: #5f5f5f; border-left: 1px solid #fff; border-right: 1px solid #fff; }
.hb-end { flex: 1; background: #fff; }
.hthumb { background: #999; border: 1px solid #444; height: 25px; flex: none; }
.t1 { width: 437px; }
.t2 { width: 428px; }
.hgap { width: 46px; flex: none; }
.htrack { flex: 1; }

/* status bar */
.status { height: 32px; flex: none; background: #666; color: #f4f4f4; display: flex; align-items: center; font-size: 15px; }
.ready { margin-left: 11px; width: 91px; flex: none; }
.st-pin { flex: none; }
.newtasks { margin-left: 6px; flex: 1; white-space: nowrap; letter-spacing: -.1px; }
.views { display: flex; height: 32px; flex: none; }
.view { width: 60px; height: 32px; display: flex; align-items: center; justify-content: center; }
.view.on { background: #404040; }
.zoom { display: flex; align-items: center; width: 203px; flex: none; }
.zm { width: 28px; text-align: center; color: #bbb; font-size: 18px; flex: none; }
.zline { width: 148px; height: 3px; background: #fff; flex: none; position: relative; }
.zthumb { position: absolute; left: 69px; top: -8px; width: 7px; height: 19px; background: #fff; display: block; }

/* taskbar */
.taskbar { height: 60px; flex: none; background: #101010; color: #f4f4f4; display: flex; align-items: center; }
.slot { width: 75.100px; height: 60px; flex: none; display: flex; align-items: center; justify-content: center; position: relative; }
.slot svg { display: block; }
.slot.open::after { content: ""; position: absolute; left: 7px; right: 7px; bottom: 0; height: 3px; background: #76b9ed; }
.slot.active { background: #333; }
.slot.active::after { left: 0; right: 0; }
.ti { font-family: "Open Sans", sans-serif; font-size: 14px; font-weight: 700; fill: #fff; }
.tray { flex: 1; display: flex; align-items: center; justify-content: flex-end; height: 60px; }
.t-bat { margin-left: 27px; }
.t-wifi { margin-left: 28px; }
.t-vol { margin-left: 26px; }
.clock { display: flex; flex-direction: column; align-items: flex-end; margin-left: 28px; font-size: 17px; line-height: 28px; }
.desk { width: 1px; height: 60px; background: #666; margin: 0 6px 0 16px; }
```
